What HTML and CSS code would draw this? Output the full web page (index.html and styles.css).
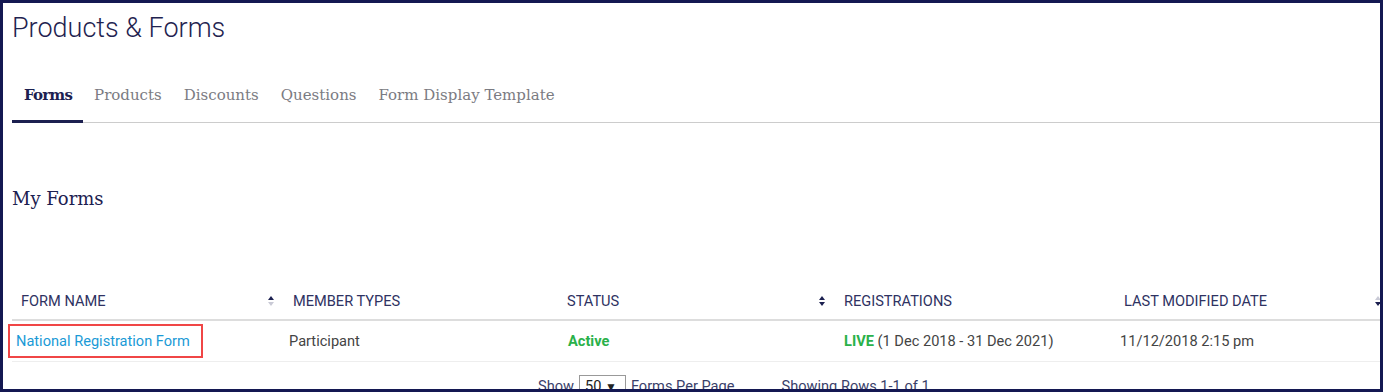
FILE: index.html
```html
<!DOCTYPE html>
<html lang="en">

<head>
  <meta charset="UTF-8">
  <meta name="viewport" content="width=device-width, initial-scale=1.0">
  <title>Products &amp; Forms</title>
  <link rel="stylesheet" href="styles.css">
</head>

<body>
  <div class="frame">
    <div class="page">
      <h1 class="page-title">Products &amp; Forms</h1>

      <ul class="tabs">
        <li class="tab active">Forms</li>
        <li class="tab">Products</li>
        <li class="tab">Discounts</li>
        <li class="tab">Questions</li>
        <li class="tab">Form Display Template</li>
      </ul>

      <h2 class="section-title">My Forms</h2>

      <table class="forms">
        <colgroup>
          <col style="width: 272px">
          <col style="width: 274px">
          <col style="width: 277px">
          <col style="width: 280px">
          <col style="width: 276px">
        </colgroup>
        <thead>
          <tr>
            <th>
              <div class="th-inner">FORM NAME <span class="sort asc"><i class="up"></i><i class="down"></i></span></div>
            </th>
            <th>MEMBER TYPES</th>
            <th>
              <div class="th-inner">STATUS <span class="sort"><i class="up"></i><i class="down"></i></span></div>
            </th>
            <th>REGISTRATIONS</th>
            <th>
              <div class="th-inner">LAST MODIFIED DATE <span class="sort desc"><i class="up"></i><i class="down"></i></span></div>
            </th>
          </tr>
        </thead>
        <tbody>
          <tr>
            <td><a class="form-link" href="#">National Registration Form</a></td>
            <td>Participant</td>
            <td class="status"><b class="live">Active</b></td>
            <td class="reg"><b class="live">LIVE</b> (1 Dec 2018 - 31 Dec 2021)</td>
            <td>11/12/2018 2:15 pm</td>
          </tr>
        </tbody>
      </table>

      <div class="pager">
        <span>Show</span>
        <span class="per-page">50 <span class="caret">&#9660;</span></span>
        <span>Forms Per Page</span>
        <span class="rows">Showing Rows 1-1 of 1</span>
      </div>
    </div>
  </div>
</body>

</html>
```

FILE: styles.css
```css
* {
  box-sizing: border-box;
}

body {
  margin: 0;
  background-color: white;
  font-family: Roboto, "Liberation Sans", sans-serif;
}

.frame {
  height: 392px;
  border: 3px solid #141852;
  overflow: hidden;
}

.page {
  padding-left: 9px;
}

.page-title {
  margin: 10px 0 0;
  font-size: 27px;
  line-height: 30px;
  font-weight: 300;
  color: #1f2350;
}

.tabs {
  list-style: none;
  margin: 41px 0 0;
  padding: 0;
  display: flex;
  border-bottom: 1px solid #cccccc;
}

.tab {
  padding: 0 11px 14px;
  font-family: "DejaVu Serif", serif;
  font-size: 15px;
  line-height: 22px;
  color: #7b7b82;
  margin-bottom: -1px;
  border-bottom: 3px solid transparent;
}

.tab.active {
  padding-left: 12px;
  font-weight: bold;
  letter-spacing: -0.8px;
  color: #1c2050;
  border-bottom-color: #1c2050;
}

.section-title {
  margin: 64px 0 0;
  font-family: "DejaVu Serif", serif;
  font-size: 18px;
  line-height: 24px;
  font-weight: normal;
  color: #1c2050;
}

.forms {
  margin-top: 72px;
  table-layout: fixed;
  width: 1379px;
  border-collapse: collapse;
  font-size: 14.6px;
}

.forms th {
  text-align: left;
  font-weight: normal;
  color: #2e3262;
  padding: 0 9px;
  height: 37px;
  border-bottom: 2px solid #dddddd;
}

.th-inner {
  display: flex;
  align-items: center;
  justify-content: space-between;
}

.sort {
  display: flex;
  flex-direction: column;
  gap: 2px;
  margin-right: 1px;
}

.sort i {
  width: 0;
  height: 0;
  border-left: 3.5px solid transparent;
  border-right: 3.5px solid transparent;
}

.sort .up {
  border-bottom: 4px solid #1c2050;
}

.sort .down {
  border-top: 4px solid #1c2050;
}

.sort.asc .down {
  border-top-color: #c9cad6;
}

.sort.desc .up {
  border-bottom-color: #c9cad6;
}

.forms td {
  padding: 0 5px;
  height: 41px;
  color: #444444;
  border-bottom: 1px solid #eeeeee;
}

.forms td.status {
  padding-left: 10px;
}

.forms td.reg {
  padding-left: 9px;
}

.form-link {
  display: inline-block;
  margin-left: -9px;
  padding: 6px 11px 6px 6px;
  border: 2px solid #f04646;
  color: #1a9ad6;
  text-decoration: none;
}

.live {
  color: #2ab14a;
}

.pager {
  display: flex;
  align-items: center;
  gap: 5px;
  margin-left: 526px;
  padding-top: 13px;
  font-size: 14.6px;
  color: #3a3f6a;
}

.per-page {
  border: 1px solid #999999;
  padding: 1px 8px 1px 5px;
  color: #222222;
}

.caret {
  font-size: 12px;
}

.rows {
  margin-left: 42px;
}
```
